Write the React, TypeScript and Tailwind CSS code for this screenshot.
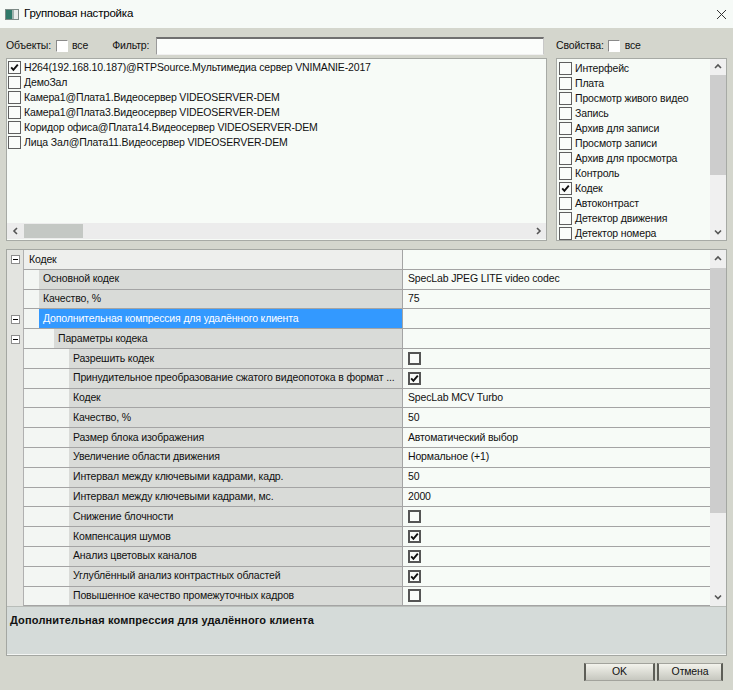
import React from "react";

type Row = {
  level: number;
  label: string;
  value?: string;
  check?: boolean;
  expand?: boolean;
  selected?: boolean;
};

const rows: Row[] = [
  { level: 0, label: "Кодек", expand: true },
  { level: 1, label: "Основной кодек", value: "SpecLab JPEG LITE video codec" },
  { level: 1, label: "Качество, %", value: "75" },
  { level: 1, label: "Дополнительная компрессия для удалённого клиента", expand: true, selected: true },
  { level: 2, label: "Параметры кодека", expand: true },
  { level: 3, label: "Разрешить кодек", check: false },
  { level: 3, label: "Принудительное преобразование сжатого видеопотока в формат ...", check: true },
  { level: 3, label: "Кодек", value: "SpecLab MCV Turbo" },
  { level: 3, label: "Качество, %", value: "50" },
  { level: 3, label: "Размер блока изображения", value: "Автоматический выбор" },
  { level: 3, label: "Увеличение области движения", value: "Нормальное (+1)" },
  { level: 3, label: "Интервал между ключевыми кадрами, кадр.", value: "50" },
  { level: 3, label: "Интервал между ключевыми кадрами, мс.", value: "2000" },
  { level: 3, label: "Снижение блочности", check: false },
  { level: 3, label: "Компенсация шумов", check: true },
  { level: 3, label: "Анализ цветовых каналов", check: true },
  { level: 3, label: "Углублённый анализ контрастных областей", check: true },
  { level: 3, label: "Повышенное качество промежуточных кадров", check: false },
  { level: 3, label: "" },
];

const objects = [
  { name: "H264(192.168.10.187)@RTPSource.Мультимедиа сервер VNIMANIE-2017", on: true },
  { name: "ДемоЗал", on: false },
  { name: "Камера1@Плата1.Видеосервер VIDEOSERVER-DEM", on: false },
  { name: "Камера1@Плата3.Видеосервер VIDEOSERVER-DEM", on: false },
  { name: "Коридор офиса@Плата14.Видеосервер VIDEOSERVER-DEM", on: false },
  { name: "Лица Зал@Плата11.Видеосервер VIDEOSERVER-DEM", on: false },
];

const props = [
  "Интерфейс",
  "Плата",
  "Просмотр живого видео",
  "Запись",
  "Архив для записи",
  "Просмотр записи",
  "Архив для просмотра",
  "Контроль",
  "Кодек",
  "Автоконтраст",
  "Детектор движения",
  "Детектор номера",
];

const indentCls = ["w-0", "w-[15px]", "w-[30px]", "w-[45px]"];

function Tick() {
  return (
    <svg width="9" height="9" viewBox="0 0 9 9" className="block">
      <path d="M1.2 4.4 L3.4 6.8 L7.8 1.6" fill="none" stroke="#111" strokeWidth="1.9" />
    </svg>
  );
}

function ListCheck({ on }: { on: boolean }) {
  return (
    <div className="w-[13px] h-[13px] shrink-0 border border-[#5f5f5f] bg-[#fafcfa] flex items-center justify-center">
      {on && <Tick />}
    </div>
  );
}

function GridCheck({ on }: { on: boolean }) {
  return (
    <div className="w-[13px] h-[13px] shrink-0 border-2 border-[#555] bg-[#fafcfa] flex items-center justify-center">
      {on && <Tick />}
    </div>
  );
}

function SunkenCheck() {
  return (
    <div className="w-[12px] h-[12px] border-t border-l border-t-[#8a8a8a] border-l-[#8a8a8a] border-b border-r border-b-white border-r-white bg-white" />
  );
}

function Chevron({ dir }: { dir: "up" | "down" | "left" | "right" }) {
  const d = {
    up: "M2 6 L5 3 L8 6",
    down: "M2 3.5 L5 6.5 L8 3.5",
    left: "M6 2 L3 5 L6 8",
    right: "M4 2 L7 5 L4 8",
  }[dir];
  return (
    <svg width="10" height="10" viewBox="0 0 10 10" className="block">
      <path d={d} fill="none" stroke="#555" strokeWidth="1.6" />
    </svg>
  );
}

function Minus() {
  return (
    <div className="w-[9px] h-[9px] border border-[#8c8c8c] bg-white flex items-center justify-center">
      <div className="w-[5px] h-px bg-black" />
    </div>
  );
}

function GridRow({ r }: { r: Row }) {
  const cat = r.level === 0;
  return (
    <div className="flex h-[19.8px] shrink-0">
      <div className="w-[16px] shrink-0 bg-[#e3e4e0] flex items-center justify-center">
        {r.expand && <Minus />}
      </div>
      <div className="w-[379px] shrink-0 flex border-l border-l-[#b0b0b0] border-b border-b-[#a4a4a4]">
        <div className={`${indentCls[r.level]} shrink-0 bg-[#f3f6f3]`} />
        <div
          className={`flex-1 min-w-0 flex items-center whitespace-nowrap overflow-hidden ${
            cat ? "pl-[5px] bg-[#eeefed]" : "pl-[4px]"
          } ${r.selected ? "bg-[#3399ff] text-white" : cat ? "" : "bg-[#d9dbd8]"}`}
        >
          {r.label}
        </div>
      </div>
      <div className="flex-1 flex items-center pl-[5px] bg-[#f7fbf7] border-l border-l-[#a4a4a4] border-b border-b-[#a4a4a4] whitespace-nowrap">
        {r.check !== undefined ? <GridCheck on={r.check} /> : r.value}
      </div>
    </div>
  );
}

export default function App() {
  return (
    <div className="w-[733px] h-[690px] flex flex-col bg-[#d4d6cd] text-[#111] font-['Liberation_Sans',Arial,sans-serif] text-[10.5px] tracking-[-0.15px] overflow-hidden">
      {/* title bar */}
      <div className="h-[28px] shrink-0 bg-[#f6faf7] flex items-center pl-[5px] pr-[6px]">
        <svg width="14" height="11" viewBox="0 0 14 11" className="block mr-[5px]">
          <rect x="0.5" y="0.5" width="13" height="10" fill="#e9ecea" stroke="#7d8a86" />
          <rect x="1" y="1" width="6" height="9" fill="#2f7a6a" />
          <rect x="7" y="1" width="2" height="9" fill="#9fb3ad" />
        </svg>
        <span className="text-[11.5px] tracking-[-0.2px] text-black">Групповая настройка</span>
        <div className="flex-1" />
        <svg width="11" height="11" viewBox="0 0 11 11" className="block">
          <path d="M1 1 L10 10 M10 1 L1 10" stroke="#333" strokeWidth="1" />
        </svg>
      </div>

      {/* body */}
      <div className="flex-1 flex flex-col px-[6px] pt-[9px]">
        <div className="flex gap-[9px]">
          {/* left side */}
          <div className="w-[541px] shrink-0 flex flex-col">
            <div className="h-[18px] flex items-center">
              <span>Объекты:</span>
              <div className="ml-[5px] mr-[4px]">
                <SunkenCheck />
              </div>
              <span>все</span>
              <span className="ml-[24px]">Фильтр:</span>
              <div className="ml-[7px] flex-1 h-[18px] mr-[3px] bg-[#fbfdfb] border-t-2 border-t-[#707070] border-l border-l-[#9a9a9a] border-b border-b-[#f0f0f0] border-r border-r-[#c8c8c8]" />
            </div>
            <div className="mt-[3px] h-[183px] flex flex-col bg-[#f7fbf7] border border-[#a7aaa5]">
              <div className="flex-1 pt-[1px] pl-[1px]">
                {objects.map((o) => (
                  <div key={o.name} className="h-[15px] flex items-center gap-[3px] whitespace-nowrap">
                    <ListCheck on={o.on} />
                    <span>{o.name}</span>
                  </div>
                ))}
              </div>
              <div className="h-[16px] flex items-center bg-[#ececec] mb-[1px]">
                <div className="w-[17px] flex justify-center">
                  <Chevron dir="left" />
                </div>
                <div className="w-[59px] h-[14px] bg-[#c4c8c4]" />
                <div className="flex-1" />
                <div className="w-[17px] flex justify-center">
                  <Chevron dir="right" />
                </div>
              </div>
            </div>
          </div>

          {/* right side */}
          <div className="flex-1 flex flex-col">
            <div className="h-[18px] flex items-center">
              <span>Свойства:</span>
              <div className="ml-[4px] mr-[5px]">
                <SunkenCheck />
              </div>
              <span>все</span>
            </div>
            <div className="mt-[3px] h-[183px] flex bg-[#f7fbf7] border border-[#a7aaa5]">
              <div className="flex-1 pt-[2px] pl-[2px] overflow-hidden">
                {props.map((p) => (
                  <div key={p} className="h-[15px] flex items-center gap-[3px] whitespace-nowrap">
                    <ListCheck on={p === "Кодек"} />
                    <span>{p}</span>
                  </div>
                ))}
              </div>
              <div className="w-[16px] flex flex-col bg-[#f0f0f0]">
                <div className="h-[16px] flex items-center justify-center">
                  <Chevron dir="up" />
                </div>
                <div className="h-[100px] bg-[#cdcdcd]" />
                <div className="flex-1" />
                <div className="h-[16px] flex items-center justify-center">
                  <Chevron dir="down" />
                </div>
              </div>
            </div>
          </div>
        </div>

        {/* property grid */}
        <div className="mt-[8px] h-[407px] flex flex-col border border-[#a4a7a2]">
          <div className="h-[356px] flex overflow-hidden">
            <div className="flex-1 flex flex-col overflow-hidden">
              {rows.map((r, i) => (
                <GridRow key={i} r={r} />
              ))}
            </div>
            <div className="w-[16px] flex flex-col bg-[#efefef]">
              <div className="h-[18px] flex items-center justify-center">
                <Chevron dir="up" />
              </div>
              <div className="h-[245px] bg-[#cdcdcd]" />
              <div className="flex-1" />
              <div className="h-[18px] flex items-center justify-center">
                <Chevron dir="down" />
              </div>
            </div>
          </div>
          <div className="flex-1 bg-[#d5dbd9] border-t border-t-[#b9bdb9] border-b border-b-[#f4f6f4] px-[3px] pt-[5px]">
            <span className="font-bold text-[11px] tracking-[0.15px]">Дополнительная компрессия для удалённого клиента</span>
          </div>
        </div>

        {/* buttons */}
        <div className="mt-[7px] flex justify-end gap-[2px] pr-[4px]">
          <button className="w-[71px] h-[18px] bg-linear-to-b from-[#f3f3ec] to-[#c6c7bf] border-x-2 border-x-[#5d5e57] border-y border-y-[#a2a39c] flex items-center justify-center">
            OK
          </button>
          <button className="w-[66px] h-[18px] bg-linear-to-b from-[#f3f3ec] to-[#c6c7bf] border-x-2 border-x-[#5d5e57] border-y border-y-[#a2a39c] flex items-center justify-center">
            Отмена
          </button>
        </div>
      </div>
    </div>
  );
}
